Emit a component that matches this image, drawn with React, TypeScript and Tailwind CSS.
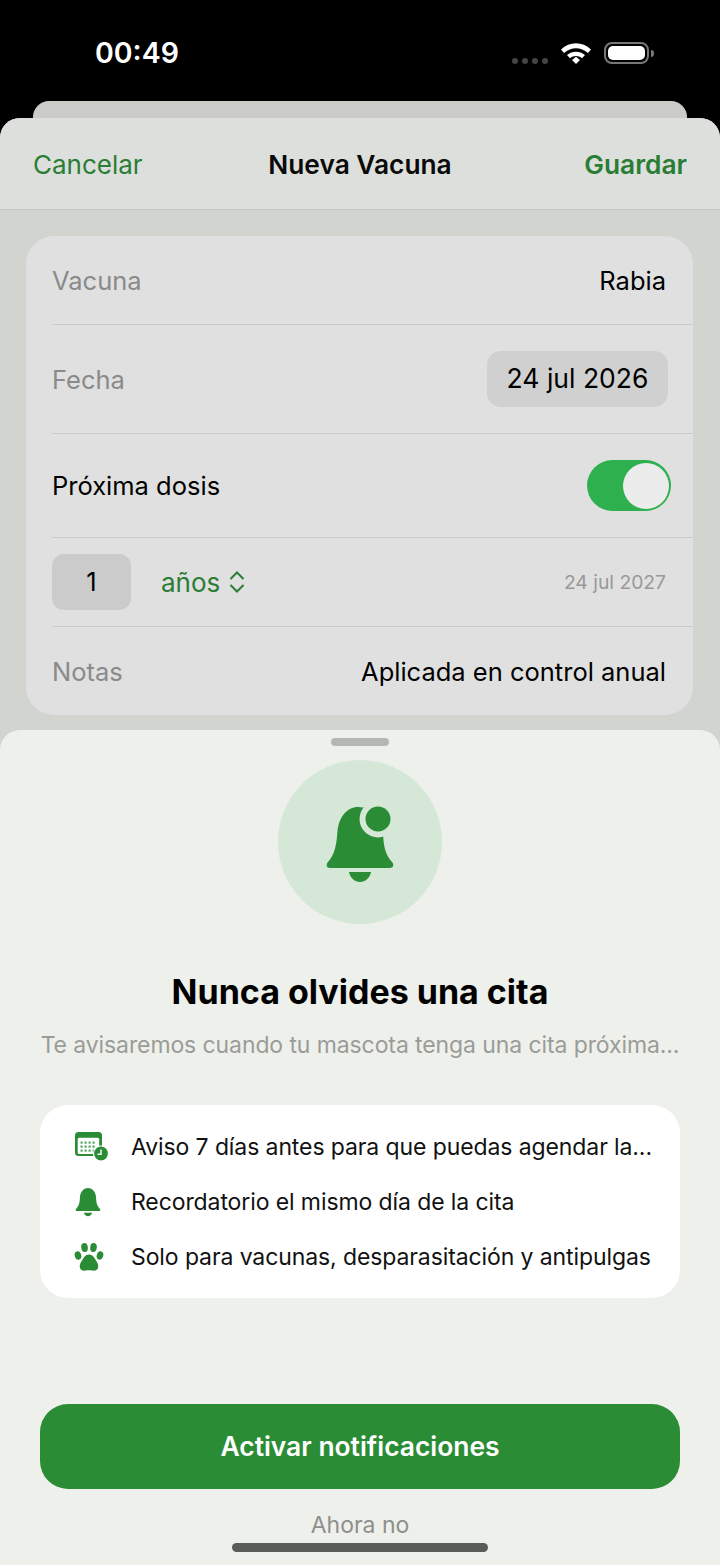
function BigBell() {
  return (
    <svg width="80" height="80" viewBox="0 0 80 80">
      <path
        d="M38 5C27 5 19 15 17.5 29C16.5 43 15 52 8 60C5.5 63 7 66 10 66H70C73 66 74.5 63 72 60C65 52 63.5 44 63 30C62.5 16 53 5 38 5Z"
        fill="#2a8c35"
      />
      <circle cx="58" cy="17" r="18.5" fill="#d5e7d6" />
      <circle cx="58" cy="17" r="12.5" fill="#2a8c35" />
      <path d="M29 70H51C50 76 45 80 40 80C35 80 30 76 29 70Z" fill="#2a8c35" />
    </svg>
  )
}

function CalendarClock() {
  return (
    <svg width="34" height="30" viewBox="0 0 34 30">
      <rect x="1" y="0" width="27" height="24" rx="3.5" fill="#2a8c35" />
      <rect x="3.7" y="5.7" width="21.5" height="16.3" rx="1.5" fill="#fff" />
      {[0, 1, 2, 3].map((c) =>
        [0, 1, 2].map((r) => (
          <rect key={`${c}-${r}`} x={6.5 + c * 4} y={9.5 + r * 4} width="2.2" height="2.2" fill="#5aa662" />
        )),
      )}
      <circle cx="27" cy="21.5" r="7.5" fill="#2a8c35" stroke="#fff" strokeWidth="1.2" />
      <path d="M27 17.5V22.2H23.5" stroke="#fff" strokeWidth="1.4" fill="none" />
    </svg>
  )
}

function SmallBell() {
  return (
    <svg width="28" height="30" viewBox="0 0 80 84">
      <path
        d="M40 2C27 2 18 14 17 28C16.5 44 15 52 6 62C3.5 65 5 68 8 68H72C75 68 76.5 65 74 62C65 52 63.5 44 63 28C62 14 53 2 40 2Z"
        fill="#2a8c35"
      />
      <path d="M28 73H52C50 79 45 83 40 83C35 83 30 79 28 73Z" fill="#2a8c35" />
    </svg>
  )
}

function Paw() {
  return (
    <svg width="30" height="30" viewBox="0 0 30 30">
      <ellipse cx="4" cy="13.5" rx="3.2" ry="4.2" fill="#2a8c35" transform="rotate(-18 4 13.5)" />
      <ellipse cx="10.5" cy="5.5" rx="3.3" ry="4.5" fill="#2a8c35" transform="rotate(-6 10.5 5.5)" />
      <ellipse cx="19.5" cy="5.5" rx="3.3" ry="4.5" fill="#2a8c35" transform="rotate(6 19.5 5.5)" />
      <ellipse cx="26" cy="13.5" rx="3.2" ry="4.2" fill="#2a8c35" transform="rotate(18 26 13.5)" />
      <path
        d="M15 12.5C11.5 12.5 9.8 15.5 8.3 18C6.8 20.3 5.5 22 5.8 25C6.1 28 9 29.3 11.5 28.6C13.3 28.1 16.7 28.1 18.5 28.6C21 29.3 23.9 28 24.2 25C24.5 22 23.2 20.3 21.7 18C20.2 15.5 18.5 12.5 15 12.5Z"
        fill="#2a8c35"
      />
    </svg>
  )
}

function StatusIcons() {
  return (
    <div className="flex items-center">
      <div className="flex gap-[4px] mt-[16px] mr-[12px]">
        {[0, 1, 2, 3].map((i) => (
          <span key={i} className="w-[6px] h-[6px] rounded-full bg-[#444]" />
        ))}
      </div>
      <svg width="32" height="22" viewBox="0 0 32 22" className="mr-[12px]">
        <path d="M1 7.5C9.5 -0.8 22.5 -0.8 31 7.5L28 11C21 4.5 11 4.5 4 11Z" fill="#fff" />
        <path d="M7 13C12 8.5 20 8.5 25 13L22 16.2C18.5 13.2 13.5 13.2 10 16.2Z" fill="#fff" />
        <path d="M12 18L16 14.8L20 18L16 22Z" fill="#fff" />
      </svg>
      <div className="w-[45px] h-[22px] rounded-[8px] border-2 border-[#777] p-[2px]">
        <div className="w-full h-full rounded-[5px] bg-white" />
      </div>
      <div className="w-[3px] h-[7px] rounded-r-full bg-[#777] ml-[2px]" />
    </div>
  )
}

const perks = [
  { icon: <CalendarClock />, text: 'Aviso 7 días antes para que puedas agendar la...' },
  { icon: <SmallBell />, text: 'Recordatorio el mismo día de la cita' },
  { icon: <Paw />, text: 'Solo para vacunas, desparasitación y antipulgas' },
]

export default function App() {
  return (
    <div className="w-[720px] h-[1565px] bg-black overflow-hidden flex flex-col font-['Inter',sans-serif]">
      {/* Status bar */}
      <div className="h-[101px] shrink-0 flex items-start justify-between pl-[95px] pr-[66px] pt-[36px]">
        <span className="text-white text-[28.5px] leading-[34px] font-semibold">00:49</span>
        <div className="mt-[6px]">
          <StatusIcons />
        </div>
      </div>

      {/* Sheet behind */}
      <div className="h-[17px] shrink-0 mx-[33px] rounded-t-[16px] bg-[#cbccc8]" />

      {/* Form sheet */}
      <div className="flex-1 flex flex-col rounded-t-[20px] bg-[#d2d4cf] overflow-hidden">
        <div className="h-[92px] shrink-0 px-[33px] pt-[2px] grid grid-cols-3 items-center bg-[#dcdfdb] border-b border-[#c3c5c1]">
          <span className="text-[26px] text-[#2a7d35]">Cancelar</span>
          <span className="text-[26.3px] font-semibold text-[#0a0a0a] text-center whitespace-nowrap">Nueva Vacuna</span>
          <span className="text-[26.3px] font-semibold text-[#2a7d35] text-right">Guardar</span>
        </div>

        <div className="ml-[26px] w-[667px] mt-[26px] rounded-[28px] bg-[#e0e0e0] pl-[26px] text-[25.5px] text-black">
          <div className="h-[89px] flex items-center justify-between pr-[27px] border-b border-[#cbcbcb]">
            <span className="mt-[2px] text-[#8a8a8a]">Vacuna</span>
            <span className="mt-[2px]">Rabia</span>
          </div>
          <div className="h-[109px] flex items-center justify-between pr-[25px] border-b border-[#cbcbcb]">
            <span className="mt-[2px] text-[#8a8a8a]">Fecha</span>
            <span className="w-[181px] h-[56px] rounded-[14px] bg-[#d0d0d0] flex items-center justify-center text-[26.5px]">
              24 jul 2026
            </span>
          </div>
          <div className="h-[104px] flex items-center justify-between pr-[22px] border-b border-[#cbcbcb]">
            <span className="mt-[2px]">Próxima dosis</span>
            <div className="w-[84px] h-[51px] rounded-full bg-[#2eb04e] flex items-center justify-end pr-[2px]">
              <div className="w-[46px] h-[46px] rounded-full bg-[#ececec]" />
            </div>
          </div>
          <div className="h-[89px] flex items-center pr-[27px] border-b border-[#cbcbcb]">
            <span className="w-[79px] h-[56px] rounded-[12px] bg-[#cbcbcb] flex items-center justify-center">1</span>
            <span className="ml-[30px] text-[26px] text-[#2a7d35]">años</span>
            <svg width="16" height="22" viewBox="0 0 16 22" className="ml-[9px] mt-[-1px]" fill="none" stroke="#2a7d35" strokeWidth="2">
              <path d="M1.5 8L8 1.5L14.5 8" />
              <path d="M1.5 14L8 20.5L14.5 14" />
            </svg>
            <span className="ml-auto text-[19.3px] text-[#999]">24 jul 2027</span>
          </div>
          <div className="h-[88px] flex items-center justify-between pr-[27px]">
            <span className="mt-[2px] text-[#8a8a8a]">Notas</span>
            <span className="mt-[2px]">Aplicada en control anual</span>
          </div>
        </div>

        {/* Notification prompt */}
        <div className="mt-[15px] flex-1 flex flex-col items-center rounded-t-[20px] bg-[#eef0eb]">
          <div className="mt-[8px] w-[58px] h-[8px] rounded-full bg-[#b5b7b3]" />
          <div className="mt-[14px] w-[164px] h-[164px] rounded-full bg-[#d5e7d6] flex items-center justify-center">
            <BigBell />
          </div>
          <h1 className="mt-[46px] text-[34px] leading-[44px] font-bold text-black">Nunca olvides una cita</h1>
          <p className="mt-[16px] text-[23px] tracking-[-0.1px] leading-[30px] text-[#9a9c98] whitespace-nowrap">
            Te avisaremos cuando tu mascota tenga una cita próxima...
          </p>

          <div className="mt-[45px] w-[640px] rounded-[28px] bg-white py-[14px]">
            {perks.map((p) => (
              <div key={p.text} className="h-[55px] flex items-center">
                <div className="w-[91px] pl-[34px] shrink-0 flex items-center">{p.icon}</div>
                <span className="mt-[2px] text-[23px] tracking-[-0.1px] text-[#111] whitespace-nowrap">{p.text}</span>
              </div>
            ))}
          </div>

          <button className="mt-[106px] w-[640px] h-[85px] rounded-[28px] bg-[#2a8c35] text-white text-[26.4px] font-semibold">
            Activar notificaciones
          </button>
          <span className="mt-[21px] text-[23px] leading-[30px] text-[#8d8f8b]">Ahora no</span>
          <div className="mt-[3px] w-[256px] h-[9px] rounded-full bg-[#5a5c59]" />
        </div>
      </div>
    </div>
  )
}
